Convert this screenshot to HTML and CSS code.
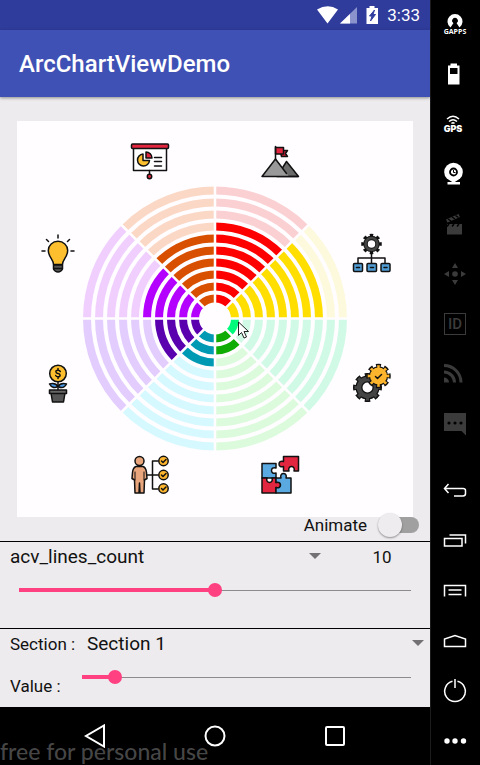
FILE: index.html
```html
<!DOCTYPE html>
<html lang="en">
<head>
<meta charset="utf-8">
<meta name="viewport" content="width=device-width, initial-scale=1">
<title>ArcChartViewDemo</title>
<link rel="stylesheet" href="styles.css">
</head>
<body>
<div class="phone">
  <div class="status">
    <svg width="64" height="18" viewBox="0 0 64 18" aria-hidden="true">
      <path d="M1 3.500Q12-3 22 3.500L11.500 17.500Z" fill="#fff"/>
      <path d="M41 1v16.500H24z" fill="#8a93cc"/>
      <path d="M34 8v9.500H24z" fill="#fff"/>
      <path d="M50.500 2h3V0h5v2h3.500v16H50.500z" fill="#fff"/>
      <path d="M58.500 4l-5 6h2.500l-1.500 5 5-6.500h-2.500z" fill="#303f9f" stroke="#303f9f"/>
    </svg>
    <span>3:33</span>
  </div>
  <header class="appbar"><h1>ArcChartViewDemo</h1></header>

  <main>
    <div class="chart-wrap">
      <svg class="chart" viewBox="0 0 396 396" role="img" aria-label="Arc chart">
        <defs>
          <path id="wedge" d="M0 0L1 0A1 1 0 0 1 .7071 .7071Z"/>
          <mask id="rings" maskUnits="userSpaceOnUse" x="-140" y="-140" width="280" height="280">
            <g fill="none" stroke="#fff" stroke-width="8">
              <circle r="20"/><circle r="32"/><circle r="44"/><circle r="56"/><circle r="68"/>
              <circle r="80"/><circle r="92"/><circle r="104"/><circle r="116"/><circle r="128"/>
            </g>
            <path d="M-140 0H140M0-140V140M-100-100L100 100M-100 100L100-100" stroke="#000" stroke-width="2.500"/>
          </mask>
        </defs>
        <g transform="translate(198 197.500)">
          <g mask="url(#rings)">
            <!-- Section backgrounds -->
            <use href="#wedge" transform="rotate(-90) scale(134)" fill="#fad0d2"/>
            <use href="#wedge" transform="rotate(-45) scale(134)" fill="#fdf9dc"/>
            <use href="#wedge" transform="scale(134)" fill="#d0f9e6"/>
            <use href="#wedge" transform="rotate(45) scale(134)" fill="#dcfadc"/>
            <use href="#wedge" transform="rotate(90) scale(134)" fill="#d6f8ff"/>
            <use href="#wedge" transform="rotate(135) scale(134)" fill="#e3ccfe"/>
            <use href="#wedge" transform="rotate(180) scale(134)" fill="#f0cffe"/>
            <use href="#wedge" transform="rotate(225) scale(134)" fill="#fbd8c6"/>
            <!-- Section values: radius is 14 + 12 per filled line -->
            <use href="#wedge" transform="rotate(-90) scale(98)" fill="#fe0000"/>
            <use href="#wedge" transform="rotate(-45) scale(110)" fill="#ffde00"/>
            <use href="#wedge" transform="scale(26)" fill="#00fa7c"/>
            <use href="#wedge" transform="rotate(45) scale(38)" fill="#10ab04"/>
            <use href="#wedge" transform="rotate(90) scale(50)" fill="#0099b4"/>
            <use href="#wedge" transform="rotate(135) scale(62)" fill="#5a00ae"/>
            <use href="#wedge" transform="rotate(180) scale(74)" fill="#b400ff"/>
            <use href="#wedge" transform="rotate(225) scale(86)" fill="#d84f00"/>
          </g>
        </g>

        <g stroke="#111" stroke-width="1.500" stroke-linecap="round" stroke-linejoin="round">
          <!-- Presentation -->
          <g transform="translate(113 21)">
            <path d="M3.500 6h33v22.500h-33z" fill="#fff"/>
            <rect x="1.500" y="2" width="37" height="4.500" rx="1" fill="#e2263f"/>
            <path d="M13 12a6 6 0 1 0 6.500 6.500H13z" fill="#fdbf2d"/>
            <path d="M16 10a6 6 0 0 1 6 6h-6z" fill="#e2263f"/>
            <path d="M24.500 15.500h7M24.500 19.500h7M24.500 24h7M19.500 28.500v4" fill="none"/>
            <circle cx="19.500" cy="34.500" r="2.200" fill="#e2263f"/>
          </g>
          <!-- Mountain -->
          <g transform="translate(243 21)">
            <path d="M17 34.500L26.500 19.500L38.500 34.500Z" fill="#6b6b6b"/>
            <path d="M2 34.500L15.500 17L29 34.500Z" fill="#999" stroke="none"/>
            <path d="M26.500 31.500L15.500 17L2 34.500H38" fill="none"/>
            <path d="M20 8.500h7.500l-2 3 2 3h-6z" fill="#c91d35"/>
            <path d="M15.500 5.500h8V12h-8z" fill="#e2263f"/>
            <path d="M15.500 4.500v13" fill="none"/>
          </g>
          <!-- Light bulb -->
          <g transform="translate(21 113)">
            <path d="M15.500 30.500c0-5-5.200-7.500-5.200-14a9.700 9.200 0 0 1 19.400 0c0 6.500-5.200 9-5.200 14z" fill="#fdbf2d"/>
            <path d="M15.500 31h9v4q-1.500 3-4.500 3t-4.500-3z" fill="#555"/>
            <path d="M16 34.500h8M20 1v3M8.500 5.500l2 2M31.500 5.500l-2 2M4 17h3M33 17h3" fill="none"/>
          </g>
          <!-- Money plant -->
          <g transform="translate(21 243)">
            <path d="M20 18v8" fill="none"/>
            <path d="M20 22.500q-2.500-4-8.500-2.500 3 5.500 8.500 2.500q5.500 3 8.500-2.500-6-1.500-8.500 2.500z" fill="#4a9be8"/>
            <circle cx="20" cy="9.500" r="8.300" fill="#fdbf2d"/>
            <path d="M22.300 7.500q-.8-1.300-2.300-1.300c-3 0-2.600 3 0 3.300s3 3.300 0 3.300q-1.700 0-2.300-1.300M20 4.500v1.500M20 13v1.500" fill="none"/>
            <path d="M13 29h14l-1.500 9h-11z" fill="#555"/>
            <path d="M11.500 26h17v3.500h-17z" fill="#666"/>
          </g>
          <!-- Process hierarchy -->
          <g transform="translate(335 113)">
            <g fill="none" stroke-linecap="butt">
              <circle cx="19.500" cy="10" r="8" stroke-width="4.500" pathLength="16" stroke-dasharray="1 1" stroke-dashoffset=".5"/>
              <circle cx="19.500" cy="10" r="6" stroke="#111" stroke-width="4.500"/>
              <circle cx="19.500" cy="10" r="6" stroke="#444" stroke-width="2.500"/>
            </g>
            <path d="M19.500 19v10M6 29v-5h27v5" fill="none"/>
            <g fill="#4f9bd4">
              <rect x="1.500" y="29.500" width="9" height="8" rx="1"/><rect x="15" y="29.500" width="9.500" height="8" rx="1"/><rect x="29" y="29.500" width="9" height="8" rx="1"/>
            </g>
            <path d="M4.500 33.500h3M18.500 33.500h3M32 33.500h3" fill="none"/>
          </g>
          <!-- Gears -->
          <g transform="translate(335 243)">
            <g fill="none" stroke-linecap="butt">
              <circle cx="15.500" cy="23.500" r="12" stroke-width="5" pathLength="16" stroke-dasharray="1.100 .9" stroke-dashoffset=".55"/>
              <circle cx="15.500" cy="23.500" r="8.500" stroke-width="7"/>
              <circle cx="15.500" cy="23.500" r="11.500" stroke="#444" stroke-width="3" pathLength="16" stroke-dasharray=".7 1.300" stroke-dashoffset=".35"/>
              <circle cx="15.500" cy="23.500" r="8.500" stroke="#444" stroke-width="4.500"/>
              <circle cx="26.500" cy="12" r="9.500" stroke-width="5.500" pathLength="16" stroke-dasharray="1.200 .8" stroke-dashoffset=".6"/>
              <circle cx="26.500" cy="12" r="9.700" fill="#111" stroke="none"/>
              <circle cx="26.500" cy="12" r="9.300" stroke="#fdb52d" stroke-width="3" pathLength="16" stroke-dasharray=".7 1.300" stroke-dashoffset=".35"/>
              <circle cx="26.500" cy="12" r="8.500" fill="#fdb52d" stroke="none"/>
            </g>
            <path d="M23.500 12.500l2 2 4-4" fill="none"/>
          </g>
          <!-- Person skills -->
          <g transform="translate(113 334)">
            <path d="M17 20h11M28 6h-5.500v28H28" fill="none"/>
            <path d="M6 11.500h7q3 1 3.500 6l.5 6-2.500 1.500-.5 13H10l-.5-10-.5 10H5L4.500 25 2 23.500l.5-6q.5-5 3.500-6z" fill="#e9a57c"/>
            <path d="M5 17v8M14 17v8" fill="none" stroke-width="1"/>
            <circle cx="9.500" cy="6" r="4.500" fill="#e9a57c"/>
            <g fill="#fdb52d"><circle cx="33.500" cy="6" r="4.700"/><circle cx="33.500" cy="20" r="4.700"/><circle cx="33.500" cy="33.500" r="4.700"/></g>
            <path d="M31.500 6l1.500 1.500 3-3M31.500 20l1.500 1.500 3-3M31.500 33.500l1.500 1.500 3-3" fill="none"/>
          </g>
          <!-- Puzzle -->
          <g transform="translate(243 334)">
            <path d="M2 23V8.500h14V13c-6-2-6 7 0 5v5z" fill="#5aa9e0"/>
            <path d="M2 23h5c-2 6 7 6 5 0h4v4.500c6-2 6 7 0 5V38H2z" fill="#e2263f"/>
            <path d="M16 23h5c-2-6 7-6 5 0h5v15H16v-5.500c6 2 6-7 0-5z" fill="#5aa9e0"/>
            <path d="M23.500 1.500h15V16H34c2-6-7-6-5 0h-5.500v-4.500c-6 2-6-7 0-5z" fill="#e2263f"/>
          </g>
        </g>
        <path d="M221.500 201v13.500l3-3 2.500 5.500 2.500-1-2.500-5.500h4.500z" fill="#fff" stroke="#222"/>
      </svg>
    </div>

    <div class="animate">
      <label for="animate">Animate</label>
      <input id="animate" class="switch" type="checkbox">
    </div>

    <section class="panel panel-attr">
      <div class="row">
        <div class="spinner">
          <select aria-label="Attribute"><option>acv_lines_count</option></select>
        </div>
        <output class="count" for="attr-value">10</output>
      </div>
      <div class="slide">
        <input id="attr-value" class="range" type="range" min="0" max="20" value="10" style="--fill:.5" aria-label="acv_lines_count value">
      </div>
    </section>

    <section class="panel">
      <div class="row">
        <label class="caption" for="section">Section :</label>
        <div class="spinner">
          <select id="section"><option>Section 1</option></select>
        </div>
      </div>
      <div class="value-row">
        <label class="caption" for="value">Value :</label>
        <input id="value" class="range" type="range" min="0" max="10" value="1" style="--fill:.1">
      </div>
    </section>
  </main>

  <nav class="navbar">
    <button aria-label="Back"><svg width="24" height="24" viewBox="0 0 24 24"><path d="M21 1.500v21L3 12Z"/></svg></button>
    <button aria-label="Home"><svg width="24" height="24" viewBox="0 0 24 24"><circle cx="12" cy="12" r="9.500"/></svg></button>
    <button aria-label="Overview"><svg width="24" height="24" viewBox="0 0 24 24"><rect x="3" y="3" width="18" height="18" rx="1"/></svg></button>
  </nav>
  <div class="watermark">free for personal use</div>
</div>

<aside class="tools">
  <div class="group">
    <button class="gapps"><svg width="24" height="15" viewBox="0 0 24 15"><path d="M7.500 14.500A7.500 7.500 0 1 1 16.500 14.500L13.500 10A2.700 2.700 0 1 0 10.500 10Z" fill="#fff"/><path d="M11 8h2v7h-2z" fill="#000"/><circle cx="12" cy="7.500" r="2.500" fill="#000"/></svg><span>GAPPS</span></button>
    <button aria-label="Battery"><svg width="24" height="24" viewBox="0 0 24 24"><path d="M5 3.500h2.500V1.500h6.500v2h2.500v19H5zM7 6v6h7.500V6z" fill="#fff" fill-rule="evenodd"/></svg></button>
    <button class="gps"><svg width="24" height="9" viewBox="0 0 24 9" fill="none" stroke="#fff" stroke-width="1.500"><path d="M4 4Q10 -1.500 16 4M6 6.500Q10 3 14 6.500M8.500 8.500Q10 7 11.500 8.500"/></svg><span>GPS</span></button>
    <button aria-label="Camera"><svg width="24" height="24" viewBox="0 0 24 24"><circle cx="10.500" cy="10" r="9.300" fill="#fff"/><circle cx="10.500" cy="10" r="3.500" fill="#fff" stroke="#000" stroke-width="1.800"/><path d="M10.500 8v2.500h2" fill="none" stroke="#000"/><path d="M8.500 18h4v2h4.500v2.500H4.500V20h4z" fill="#fff"/></svg></button>
    <button aria-label="Capture"><svg width="24" height="24" viewBox="0 0 24 24"><path d="M4 12h15v10.500H4zM3 7.500L15.500 2l1.500 3L4.500 10.500z" fill="#3b3b3b"/><path d="M5 7l3 2M9 5l3 2M12.500 3.500l3 2M4 14.500l2-2.500M9 14.500l2-2.500M14 14.500l2-2.500" stroke="#000" stroke-width="1.500"/></svg></button>
    <button aria-label="Move"><svg width="24" height="24" viewBox="0 0 24 24" fill="#3b3b3b"><circle cx="12" cy="12" r="2.800"/><path d="M12 1l3 5H9zM12 23l3-5H9zM1 12l5-3v6zM23 12l-5-3v6z"/></svg></button>
    <button class="ident"><span>ID</span></button>
    <button aria-label="Network"><svg width="24" height="24" viewBox="0 0 24 24" fill="none" stroke="#3b3b3b" stroke-width="3"><path d="M1 3.500A17 17 0 0 1 18 20.500M1 10A10.500 10.500 0 0 1 11.500 20.500"/><path d="M1 15.500a5 5 0 0 1 5 5H1z" fill="#3b3b3b" stroke="none"/></svg></button>
    <button aria-label="Messages"><svg width="24" height="24" viewBox="0 0 24 24"><path d="M1 1h22v22.500L18.500 19H1z" fill="#3b3b3b"/><g fill="#000"><circle cx="6" cy="11" r="1.600"/><circle cx="12" cy="11" r="1.600"/><circle cx="18" cy="11" r="1.600"/></g></svg></button>
  </div>
  <div class="group line">
    <button aria-label="Back key"><svg width="24" height="24" viewBox="0 0 24 24"><path d="M5.500 5L1.500 9.500l4 4.500M1.500 9.500H20q2.500 0 2.500 2v3q0 2.500-2.500 2.500h-9"/></svg></button>
    <button aria-label="Recent apps"><svg width="24" height="24" viewBox="0 0 24 24"><path d="M1.500 9.500h17.500v7.500H1.500zM6.500 6h16v8.500"/></svg></button>
    <button aria-label="Menu"><svg width="24" height="24" viewBox="0 0 24 24"><path d="M1.500 17.500V6.500h21v11M5.500 11h13M5.500 15.500h13"/></svg></button>
    <button aria-label="Home key"><svg width="24" height="24" viewBox="0 0 24 24"><path d="M1.500 17.500v-7.500L12 6.500l10.500 3.500v7.500z"/></svg></button>
    <button aria-label="Power"><svg width="24" height="24" viewBox="0 0 24 24"><path d="M9.500 2.300a10.300 10.300 0 1 0 5 0M12 0v9"/></svg></button>
    <button aria-label="More"><svg width="24" height="24" viewBox="0 0 24 24"><g fill="#fff" stroke="none"><circle cx="4" cy="12" r="2.700"/><circle cx="12" cy="12" r="2.700"/><circle cx="20.500" cy="12" r="2.700"/></g></svg></button>
  </div>
</aside>
</body>
</html>
```
FILE: styles.css
```css
* { box-sizing: border-box; }

body {
  margin: 0;
  min-height: 100vh;
  display: flex;
  background: #000;
  color: #111;
  font: 17px/24px Roboto, "Liberation Sans", sans-serif;
}

button, select, input { margin: 0; font: inherit; color: inherit; }
button { padding: 0; border: 0; background: none; }
svg { display: block; }

.phone {
  position: relative;
  flex: 1;
  min-width: 0;
  display: flex;
  flex-direction: column;
}

.status {
  height: 30px;
  padding: 0 10px;
  display: flex;
  align-items: center;
  justify-content: flex-end;
  gap: 7px;
  background: #303c9c;
  color: #fff;
}

.appbar {
  position: relative;
  padding: 18px 19px 17px;
  background: #3f51b5;
  box-shadow: 0 1px 3px #0006;
}

h1 {
  margin: 0;
  color: #fff;
  font-size: 24px;
  font-weight: 500;
  line-height: 32px;
}

main { flex: 1; background: #edebed; }

.chart-wrap { padding: 24px 17px 0; }
.chart { width: 100%; background: #fffdff; }

.animate {
  position: relative;
  display: flex;
  align-items: flex-start;
  justify-content: flex-end;
  gap: 11px;
  height: 28px;
  margin-top: -4px;
  padding-right: 11px;
}

.switch {
  appearance: none;
  position: relative;
  width: 41px;
  height: 24px;
}
.switch::before {
  content: "";
  position: absolute;
  inset: 4px 0 4px 8px;
  border-radius: 8px;
  background: #a0a0a0;
}
.switch::after {
  content: "";
  position: absolute;
  top: 0;
  left: 0;
  width: 24px;
  height: 24px;
  border-radius: 50%;
  background: #eeecee;
  box-shadow: 0 1px 2px #0006;
}

.panel { border-top: 1px solid #000; }
.panel-attr { padding-bottom: 20px; }

.row {
  display: flex;
  align-items: center;
  height: 30px;
  padding-left: 10px;
}

.spinner { position: relative; flex: 1; }
.spinner::after {
  content: "";
  position: absolute;
  top: 8px;
  right: 6px;
  width: 12px;
  height: 6px;
  background: #737173;
  clip-path: polygon(0 0, 100% 0, 50% 100%);
  pointer-events: none;
}
select {
  appearance: none;
  display: block;
  width: 100%;
  padding: 0;
  border: 0;
  background: none;
  font-size: 19px;
  line-height: 24px;
}

.count { width: 96px; margin-left: 7px; text-align: center; }
.caption { width: 77px; }

.slide { padding: 0 12px; }

.range {
  appearance: none;
  display: block;
  width: 100%;
  height: 36px;
  background: none;
}
.range::-webkit-slider-runnable-track {
  height: 14px;
  background:
    linear-gradient(#ff4081, #ff4081) 7px center / calc((100% - 14px) * var(--fill)) 4px no-repeat,
    linear-gradient(#8c8a8c, #8c8a8c) center / calc(100% - 14px) 1px no-repeat;
}
.range::-webkit-slider-thumb {
  appearance: none;
  width: 14px;
  height: 14px;
  border-radius: 50%;
  background: #ff4081;
}

.value-row {
  display: flex;
  align-items: flex-start;
  height: 47px;
  padding: 0 12px 0 10px;
}
.value-row .caption { flex: none; width: 65px; align-self: flex-end; line-height: 40px; }

.navbar {
  display: flex;
  height: 58px;
  padding: 0 35px;
  background: #000;
}
.navbar button {
  flex: 1;
  display: grid;
  place-items: center;
}
.navbar svg { fill: none; stroke: #fff; stroke-width: 2; }

.watermark {
  position: absolute;
  left: 0;
  bottom: 0;
  color: #77777799;
  font: 500 23px/28px Lato, sans-serif;
  white-space: nowrap;
  pointer-events: none;
}

.tools {
  flex: none;
  width: 50px;
  display: flex;
  flex-direction: column;
  justify-content: space-between;
  background: #000;
  box-shadow: inset 1px 0 #1c1c1c;
}
.group { display: grid; gap: 2px; }
.group button {
  height: 48px;
  display: flex;
  flex-direction: column;
  align-items: center;
  justify-content: center;
  color: #fff;
}
.line svg { fill: none; stroke: #fff; stroke-width: 1.5; }
.gapps span { font: bold 7px/8px "Open Sans", sans-serif; }
.gps span { font: 900 9px/10px Inter, sans-serif; padding-right: 4px; }
.ident span {
  width: 22px;
  border: 1px solid #3b3b3b;
  color: #3b3b3b;
  font-size: 15px;
  font-weight: 500;
  line-height: 20px;
  text-align: center;
}
```
